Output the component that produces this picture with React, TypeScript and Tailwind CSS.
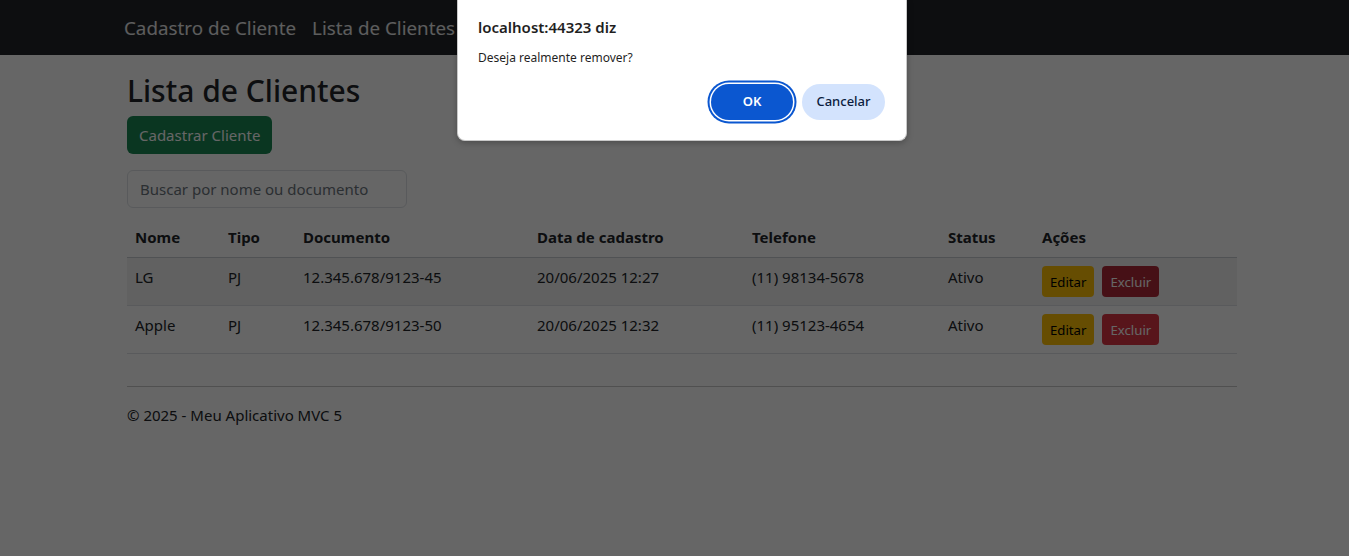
import React from "react";

const clientes = [
  { nome: "LG", tipo: "PJ", doc: "12.345.678/9123-45", data: "20/06/2025 12:27", tel: "(11) 98134-5678", status: "Ativo" },
  { nome: "Apple", tipo: "PJ", doc: "12.345.678/9123-50", data: "20/06/2025 12:32", tel: "(11) 95123-4654", status: "Ativo" },
];

export default function App() {
  return (
    <div className="relative min-h-[556px] bg-white text-[#212529] font-['Noto_Sans',sans-serif] overflow-hidden">
      {/* Navbar */}
      <nav className="h-[55px] bg-[#212529] pl-[15px] flex items-center">
        <div className="mx-auto w-[1110px] flex items-center gap-4 -translate-x-[3px] translate-y-px">
          <span className="text-[18.8px] text-white/90">Cadastro de Cliente</span>
          <span className="text-[18.8px] text-white/90">Lista de Clientes</span>
        </div>
      </nav>

      {/* Conteúdo */}
      <main className="pl-[15px] pt-[15px]">
        <div className="mx-auto w-[1110px]">
          <h2 className="h-[38px] text-[30px] leading-[38px] font-medium mb-2 translate-y-[2px]">Lista de Clientes</h2>
          <button className="h-[38px] px-3 rounded-[6px] bg-[#198754] text-white text-[15px]">
            Cadastrar Cliente
          </button>

          <div className="mt-4">
            <input
              placeholder="Buscar por nome ou documento"
              className="w-[280px] h-[38px] px-3 rounded-[6px] border border-[#dee2e6] text-[15px] placeholder:text-[#6c757d] outline-none"
            />
          </div>

          <table className="mt-[9px] w-full table-fixed border-collapse text-[15px] leading-6">
            <thead>
              <tr className="border-b border-[#c9cdd1]">
                <th className="w-[93px] px-2 py-2 text-left font-bold">Nome</th>
                <th className="w-[75px] px-2 py-2 text-left font-bold">Tipo</th>
                <th className="w-[234px] px-2 py-2 text-left font-bold">Documento</th>
                <th className="w-[215px] px-2 py-2 text-left font-bold">Data de cadastro</th>
                <th className="w-[196px] px-2 py-2 text-left font-bold">Telefone</th>
                <th className="w-[94px] px-2 py-2 text-left font-bold">Status</th>
                <th className="px-2 py-2 text-left font-bold">Ações</th>
              </tr>
            </thead>
            <tbody>
              {clientes.map((c, i) => (
                <tr key={c.nome} className={`border-b border-[#dee2e6] align-top ${i === 0 ? "bg-black/5" : ""}`}>
                  <td className="px-2 pt-[7px] pb-2">{c.nome}</td>
                  <td className="px-2 pt-[7px] pb-2">{c.tipo}</td>
                  <td className="px-2 pt-[7px] pb-2">{c.doc}</td>
                  <td className="px-2 pt-[7px] pb-2">{c.data}</td>
                  <td className="px-2 pt-[7px] pb-2">{c.tel}</td>
                  <td className="px-2 pt-[7px] pb-2">{c.status}</td>
                  <td className="px-2 py-2">
                    <div className="flex gap-2">
                      <button className="h-[31px] px-2 rounded-[4px] bg-[#ffc107] text-black text-[13.2px]">Editar</button>
                      <button className={`h-[31px] px-2 rounded-[4px] text-white text-[13.2px] ${i === 0 ? "bg-[#b02a37]" : "bg-[#dc3545]"}`}>
                        Excluir
                      </button>
                    </div>
                  </td>
                </tr>
              ))}
            </tbody>
          </table>

          <hr className="mt-[32px] border-t border-[#212529]/25" />
          <footer className="mt-4 text-[15px] leading-6">© 2025 - Meu Aplicativo MVC 5</footer>
        </div>
      </main>

      {/* Overlay do confirm() */}
      <div className="absolute inset-0 bg-black/60" />

      {/* Diálogo */}
      <div className="absolute top-0 left-[457px] w-[450px] h-[141px] bg-white rounded-b-[8px] border border-t-0 border-[#c8c8c8] shadow-[0_2px_6px_rgba(0,0,0,0.25)] px-[20px] pt-[16px]">
        <div className="text-[15px] font-semibold text-[#1f1f1f] leading-[22px]">localhost:44323 diz</div>
        <div className="mt-[11px] text-[12px] text-[#1f1f1f] leading-[18px]">Deseja realmente remover?</div>
        <div className="mt-[17px] flex justify-end gap-[9px] pr-px">
          <button className="h-9 w-[82px] rounded-full bg-[#0b57d0] text-white text-[13px] font-semibold shadow-[0_0_0_1.5px_#fff,0_0_0_3.5px_#0b57d0]">
            OK
          </button>
          <button className="h-9 w-[83px] rounded-full bg-[#d3e3fd] text-[#0b1c40] text-[13px] font-medium">
            Cancelar
          </button>
        </div>
      </div>
    </div>
  );
}
